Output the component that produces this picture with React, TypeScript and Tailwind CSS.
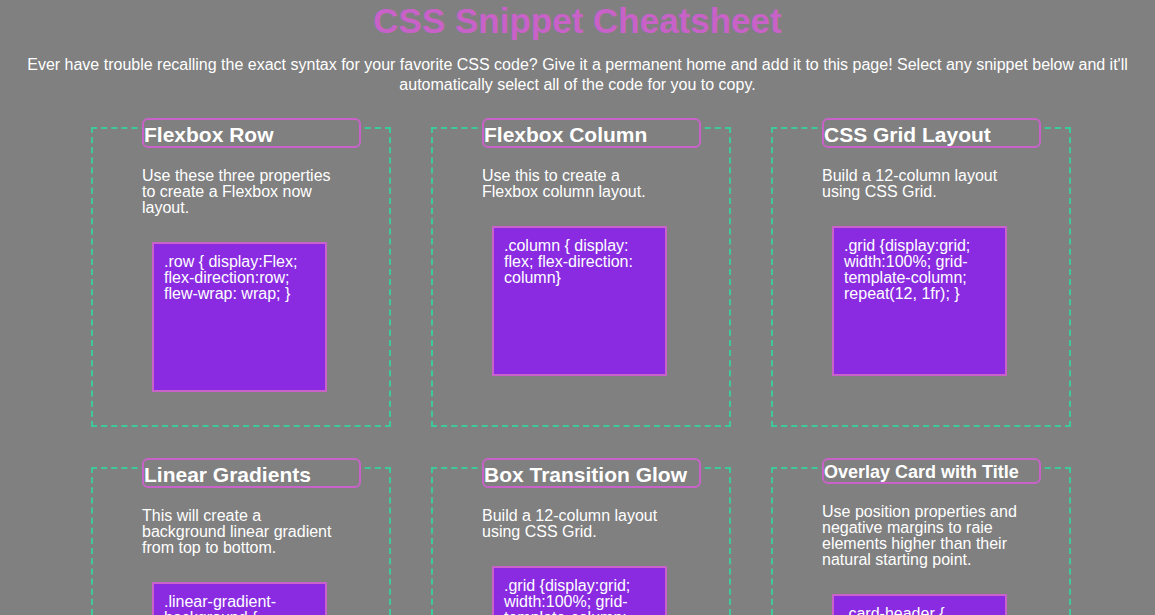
const snippets = [
  {
    title: "Flexbox Row",
    desc: "Use these three properties to create a Flexbox now layout.",
    code: ".row { display:Flex; flex-direction:row; flew-wrap: wrap; }",
  },
  {
    title: "Flexbox Column",
    desc: "Use this to create a Flexbox column layout.",
    code: ".column { display: flex; flex-direction: column}",
  },
  {
    title: "CSS Grid Layout",
    desc: "Build a 12-column layout using CSS Grid.",
    code: ".grid {display:grid; width:100%; grid-template-column; repeat(12, 1fr); }",
  },
  {
    title: "Linear Gradients",
    desc: "This will create a background linear gradient from top to bottom.",
    code: ".linear-gradient-background { background-image: linear-gradient( rgba(0,0,0,0) 0%, #000 100%); }",
  },
  {
    title: "Box Transition Glow",
    desc: "Build a 12-column layout using CSS Grid.",
    code: ".grid {display:grid; width:100%; grid-template-column; repeat(12, 1fr); }",
  },
  {
    title: "Overlay Card with Title",
    desc: "Use position properties and negative margins to raie elements higher than their natural starting point.",
    code: ".card-header { position: relative; margin-top: -20px; }",
    small: true,
  },
];

function SnippetCard({ title, desc, code, small }: { title: string; desc: string; code: string; small?: boolean }) {
  return (
    <div className="w-[300px] h-[300px] shrink-0 border-2 border-dashed border-[#3ec99d] pl-[49px]">
      <div
        className={
          small
            ? "w-[219px] h-[26px] -mt-[11px] border-2 border-[#c862c8] rounded-md bg-[#808080] pt-[3px]"
            : "w-[219px] h-[30px] -mt-[11px] border-2 border-[#c862c8] rounded-md bg-[#808080] pt-[4px]"
        }
      >
        <h3 className={small ? "text-[18px] leading-none font-bold text-white whitespace-nowrap" : "text-[21px] leading-none font-bold text-white whitespace-nowrap"}>
          {title}
        </h3>
      </div>
      <p className="mt-[20px] w-[195px] text-base leading-4 text-white">{desc}</p>
      <div className="mt-[26px] ml-[10px] w-[175px] h-[150px] border-2 border-[#c862c8] bg-[#8a2be2] p-[10px] text-base leading-4 text-white break-words">
        {code}
      </div>
    </div>
  );
}

export default function App() {
  return (
    <div className="w-full h-screen overflow-hidden bg-[#808080] font-['Liberation_Sans',Arial,sans-serif]">
      <h1 className="mt-[1px] text-center text-[35px] leading-[40px] font-bold text-[#c862c8]">CSS Snippet Cheatsheet</h1>
      <p className="mt-[14px] px-2 text-center text-base leading-5 text-white">
        Ever have trouble recalling the exact syntax for your favorite CSS code? Give it a permanent home and add it to this page! Select any snippet below and it'll automatically select all of the code for you to copy.
      </p>
      <div className="mt-[32px] pl-[91px] flex flex-wrap gap-10">
        {snippets.map((s) => (
          <SnippetCard key={s.title} {...s} />
        ))}
      </div>
    </div>
  );
}
